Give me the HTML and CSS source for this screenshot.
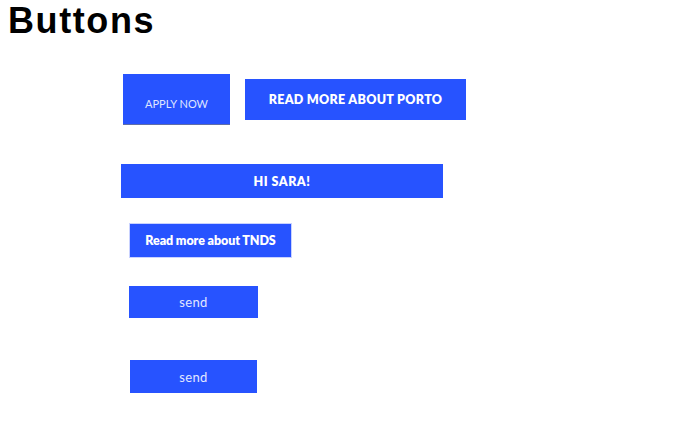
FILE: index.html
```html
<!DOCTYPE html>
<html lang="en">
<head>
<meta charset="utf-8">
<title>Buttons</title>
<link rel="stylesheet" href="styles.css">
</head>
<body>
<h1 class="title">Buttons</h1>
<div class="demo">
  <div class="row-first">
    <button class="btn btn-apply">Apply now</button>
    <button class="btn btn-porto">Read more about Porto</button>
  </div>
  <button class="btn btn-hi">Hi Sara!</button>
  <button class="btn btn-tnds">Read more about TNDS</button>
  <button class="btn btn-send btn-send-a">send</button>
  <button class="btn btn-send btn-send-b">send</button>
</div>
</body>
</html>
```

FILE: styles.css
```css
html, body {
  margin: 0;
  background: #ffffff;
}
body {
  padding: 0 8px;
  font-family: "Liberation Sans", Arial, sans-serif;
}
.title {
  margin: 0;
  font-family: "Liberation Sans", Arial, sans-serif;
  font-weight: 700;
  font-size: 36px;
  line-height: 42px;
  letter-spacing: 1.6px;
  color: #000;
}
.demo {
  display: flex;
  flex-direction: column;
  align-items: flex-start;
  padding-top: 32px;
}
.row-first {
  display: flex;
  align-items: center;
  gap: 15px;
  margin-left: 115px;
}
.btn {
  display: flex;
  align-items: center;
  justify-content: center;
  box-sizing: border-box;
  margin: 0;
  padding: 0;
  border: 0;
  background: #2753ff;
  color: #ffffff;
  font-family: Lato, "Open Sans", sans-serif;
  font-weight: 800;
  font-size: 12px;
  cursor: pointer;
}
.btn-apply {
  width: 107px;
  height: 51px;
  padding-top: 8px;
  font-weight: 400;
  font-size: 11px;
  text-transform: uppercase;
  color: #dfe5ff;
  border-bottom: 1px solid #5f6ea8;
}
.btn-porto {
  width: 221px;
  height: 41px;
  font-size: 12.5px;
  letter-spacing: 0.3px;
  text-transform: uppercase;
}
.btn-hi {
  width: 322px;
  height: 34px;
  margin-top: 39px;
  margin-left: 113px;
  font-size: 12.5px;
  letter-spacing: 0.5px;
  text-transform: uppercase;
}
.btn-tnds {
  width: 163px;
  height: 35px;
  margin-top: 25px;
  margin-left: 121px;
  font-size: 12.5px;
  letter-spacing: -0.1px;
  border: 1px solid #c9d2ff;
}
.btn-send {
  font-weight: 400;
  font-size: 13px;
  color: #e3e8ff;
  letter-spacing: 0.4px;
}
.btn-send-a {
  width: 129px;
  height: 32px;
  margin-top: 28px;
  margin-left: 121px;
}
.btn-send-b {
  width: 127px;
  height: 33px;
  margin-top: 42px;
  margin-left: 122px;
}
```
